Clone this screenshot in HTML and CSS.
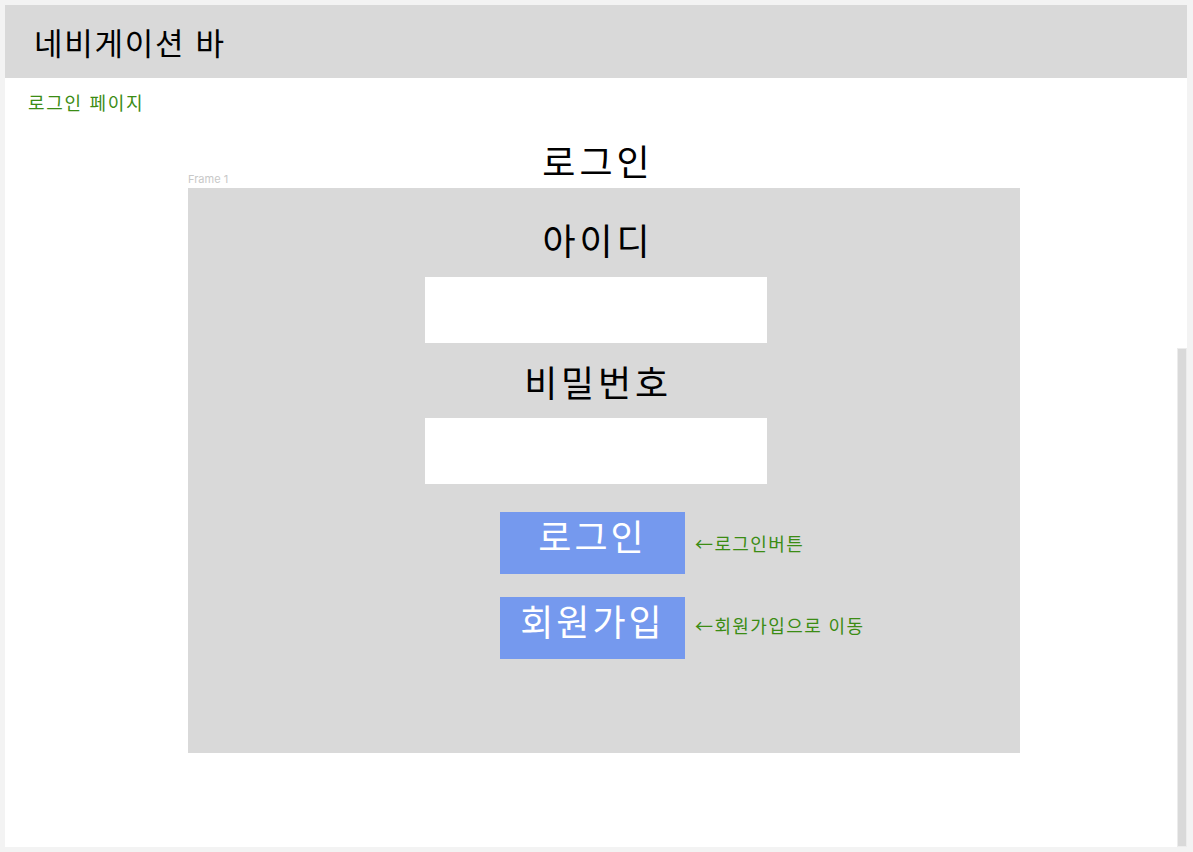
FILE: index.html
```html
<!DOCTYPE html>
<html lang="ko">
<head>
  <meta charset="UTF-8" />
  <title>로그인 페이지</title>
  <link rel="stylesheet" href="styles.css">
</head>
<body>
  <div class="canvas">
    <div class="navbar">네비게이션 바</div>

    <p class="page-note">로그인 페이지</p>

    <h1 class="title">로그인</h1>

    <div class="frame">
      <span class="frame-label">Frame 1</span>

      <div class="field">
        <label class="field-label" for="user-id">아이디</label>
        <input class="field-input" id="user-id" type="text">
      </div>

      <div class="field field-second">
        <label class="field-label" for="user-pw">비밀번호</label>
        <input class="field-input" id="user-pw" type="password">
      </div>

      <div class="btn-row btn-row-first">
        <button class="btn">로그인</button>
        <span class="note">←로그인버튼</span>
      </div>

      <div class="btn-row">
        <button class="btn">회원가입</button>
        <span class="note note-raised">←회원가입으로 이동</span>
      </div>
    </div>

    <div class="scroll-thumb"></div>
  </div>
</body>
</html>
```

FILE: styles.css
```css
body {
  margin: 0;
  background: #f3f3f3;
  font-family: "Noto Sans CJK KR", "Noto Sans", sans-serif;
}

.canvas {
  position: relative;
  margin: 5px 6px 5px 5px;
  height: 842px;
  background: #fff;
  overflow: hidden;
}

.navbar {
  height: 73px;
  display: flex;
  align-items: center;
  padding-left: 29px;
  background: #d9d9d9;
  font-size: 31px;
  letter-spacing: 1.7px;
  color: #000;
}

.page-note {
  margin: 12px 0 0 23px;
  font-size: 18px;
  line-height: 24px;
  letter-spacing: 1.7px;
  color: #3b8c14;
}

.title {
  margin: 25px 0 0;
  padding-left: 4px;
  text-align: center;
  font-size: 36px;
  font-weight: normal;
  line-height: 43px;
  letter-spacing: 4px;
}

.frame {
  position: relative;
  margin: 6px 0 0 183px;
  width: 832px;
  height: 565px;
  box-sizing: border-box;
  padding-top: 30px;
  background: #d9d9d9;
}

.frame-label {
  position: absolute;
  left: 0;
  bottom: 100%;
  margin-bottom: 2px;
  font-family: Inter, "Liberation Sans", sans-serif;
  font-size: 11px;
  line-height: 13px;
  color: #c8c8c8;
}

.field {
  margin-left: 237px;
  width: 342px;
  text-align: center;
}

.field-second {
  margin-top: 17px;
}

.field-label {
  display: block;
  padding-left: 4px;
  font-size: 36px;
  line-height: 43px;
  letter-spacing: 3.8px;
  color: #000;
}

.field-input {
  display: block;
  margin-top: 16px;
  width: 342px;
  height: 66px;
  box-sizing: border-box;
  border: none;
  background: #fff;
}

.field-second .field-input {
  margin-top: 15px;
}

.btn-row {
  display: flex;
  align-items: center;
  margin: 23px 0 0 312px;
}

.btn-row-first {
  margin-top: 28px;
}

.btn {
  display: flex;
  justify-content: center;
  align-items: flex-start;
  width: 185px;
  height: 62px;
  box-sizing: border-box;
  padding: 2px 0 0 0;
  border: none;
  background: #7599ee;
  color: #fff;
  font-family: inherit;
  font-size: 36px;
  line-height: 43px;
  letter-spacing: 3px;
}

.note {
  margin-left: 10px;
  font-size: 18px;
  line-height: 24px;
  letter-spacing: 1.4px;
  color: #3b8c14;
}

.note-raised {
  margin-bottom: 6px;
}

.scroll-thumb {
  position: absolute;
  right: 0;
  top: 343px;
  bottom: 0;
  width: 10px;
  box-sizing: border-box;
  border: 1px solid #ececec;
  background: #d9d9d9;
}
```
